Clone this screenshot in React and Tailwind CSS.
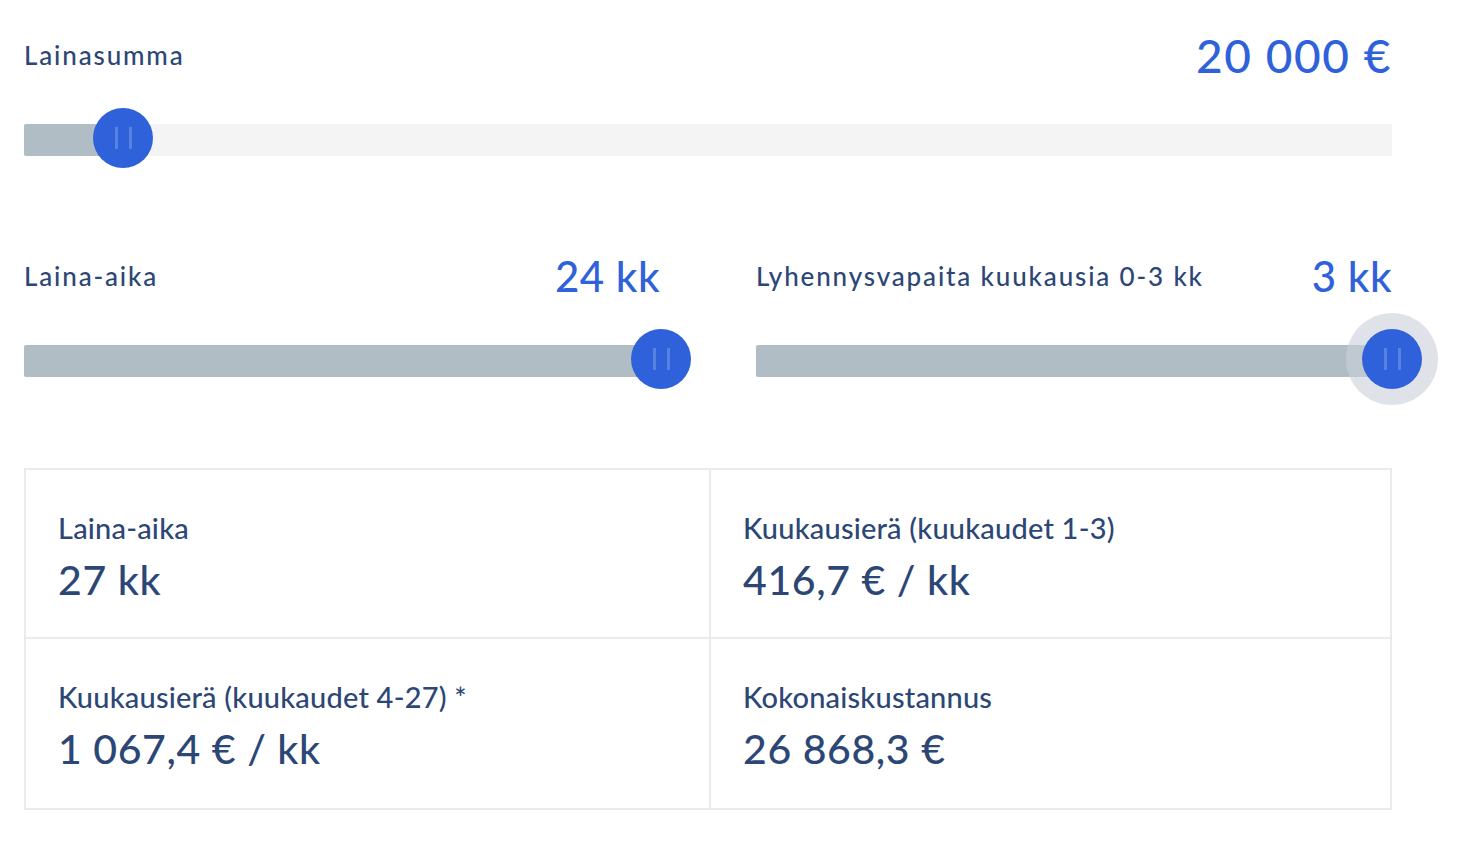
import React from "react";

const font = { fontFamily: "Lato, 'Open Sans', sans-serif" };

function Thumb({ halo }) {
  return (
    <div className="absolute top-1/2 -translate-y-1/2 w-[60px] h-[60px]">
      {halo && (
        <div className="absolute left-[-16px] top-[-16px] w-[92px] h-[92px] rounded-full bg-[#c9d0da]/60" />
      )}
      <div className="relative w-[60px] h-[60px] rounded-full bg-[#2f62da] flex items-center justify-center gap-[11px]">
        <span className="block w-[3px] h-[22px] bg-white/20" />
        <span className="block w-[3px] h-[22px] bg-white/20" />
      </div>
    </div>
  );
}

function Slider({ fill, thumbLeft, halo }) {
  return (
    <div className="h-[100px] flex items-center">
      <div className="relative w-full h-8 rounded-[2px] bg-[#f4f4f4]">
        <div
          className="absolute left-0 top-0 h-8 rounded-l-[2px] bg-[#b1bdc5]"
          style={{ width: fill }}
        />
        <div className="absolute top-[14px] h-0" style={{ left: thumbLeft }}>
          <Thumb halo={halo} />
        </div>
      </div>
    </div>
  );
}

function Header({ label, value, size, valueTracking }) {
  return (
    <div className="h-[70px] flex items-center justify-between">
      <span className="text-[26px] font-medium tracking-[1.85px] text-[#2c4776]">{label}</span>
      <span className={`${size} ${valueTracking} font-medium text-[#2f62da]`}>{value}</span>
    </div>
  );
}

function Cell({ label, value, right, bottom }) {
  return (
    <div
      className={`h-[169px] pt-[38px] pl-[32px] ${right ? "" : "border-r-2 border-[#ebebeb]"} ${
        bottom ? "" : "border-b-2 border-[#ebebeb]"
      }`}
    >
      <div className="text-[29px] font-medium leading-[40px] tracking-[0.2px] text-[#2c4776]">{label}</div>
      <div className="text-[41px] font-medium leading-[50px] tracking-[0.6px] text-[#2c4776] mt-[7px]">{value}</div>
    </div>
  );
}

export default function App() {
  return (
    <div className="w-[1458px] h-[842px] bg-white pl-[24px] pr-[66px] pt-[20px]" style={font}>
      <Header label="Lainasumma" value="20 000 €" size="text-[46px]" valueTracking="tracking-[1.6px]" />
      <Slider fill={98} thumbLeft={69} />
      <div className="grid grid-cols-[636px_636px] justify-between mt-[51px]">
        <div>
          <Header label="Laina-aika" value="24 kk" size="text-[42px]" valueTracking="tracking-[0.5px]" />
          <Slider fill={636} thumbLeft={607} />
        </div>
        <div>
          <Header label="Lyhennysvapaita kuukausia 0-3 kk" value="3 kk" size="text-[42px]" valueTracking="tracking-[0.5px]" />
          <Slider fill={636} thumbLeft={606} halo />
        </div>
      </div>
      <div className="mt-[57px] border-2 border-[#ebebeb] grid grid-cols-[685px_1fr]">
        <Cell label="Laina-aika" value="27 kk" />
        <Cell label="Kuukausierä (kuukaudet 1-3)" value="416,7 € / kk" right />
        <Cell label="Kuukausierä (kuukaudet 4-27) *" value="1 067,4 € / kk" bottom />
        <Cell label="Kokonaiskustannus" value="26 868,3 €" right bottom />
      </div>
    </div>
  );
}
